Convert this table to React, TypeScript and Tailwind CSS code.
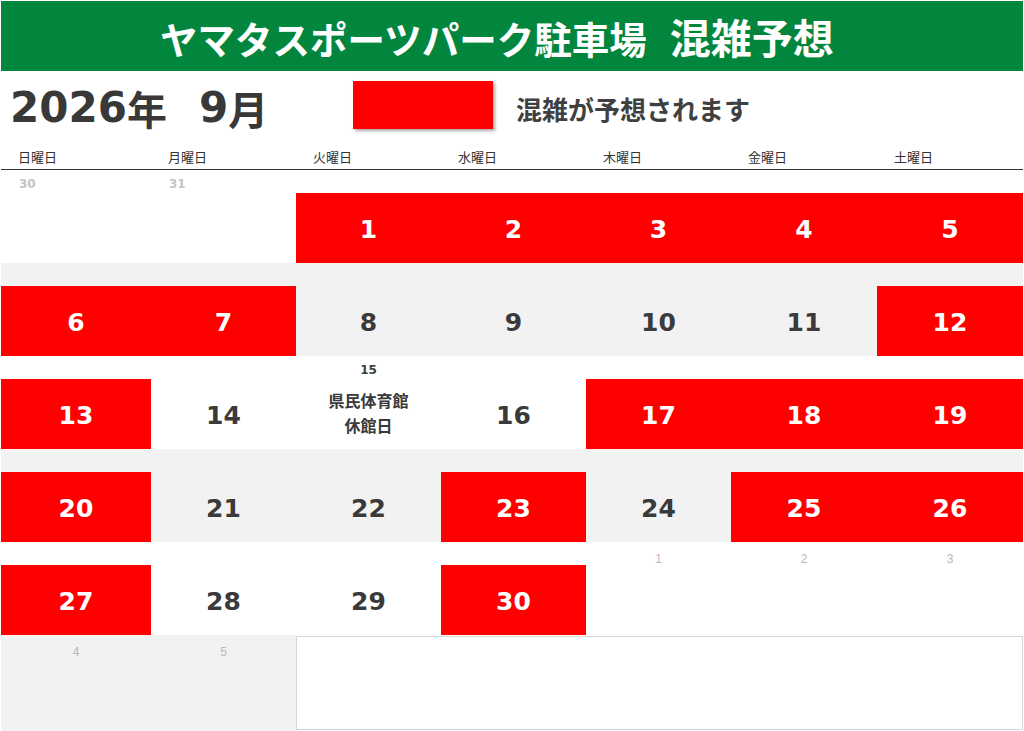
import React from "react";

type Cell = {
  n?: number;
  red?: boolean;
  label?: string;
  lt?: "prev" | "next" | "dark";
  note?: boolean;
};

const GRID = "grid grid-cols-[150px_145px_145px_145px_145px_146px_146px]";
const NUM_FONT = { fontFamily: '"DejaVu Sans", "Noto Sans CJK JP", sans-serif' };
const JP_FONT = { fontFamily: '"Noto Sans CJK JP", "Noto Sans", sans-serif' };

const weeks: { gray: boolean; cells: Cell[] }[] = [
  {
    gray: false,
    cells: [
      { label: "30", lt: "prev" },
      { label: "31", lt: "prev" },
      { n: 1, red: true },
      { n: 2, red: true },
      { n: 3, red: true },
      { n: 4, red: true },
      { n: 5, red: true },
    ],
  },
  {
    gray: true,
    cells: [
      { n: 6, red: true },
      { n: 7, red: true },
      { n: 8 },
      { n: 9 },
      { n: 10 },
      { n: 11 },
      { n: 12, red: true },
    ],
  },
  {
    gray: false,
    cells: [
      { n: 13, red: true },
      { n: 14 },
      { label: "15", lt: "dark", note: true },
      { n: 16 },
      { n: 17, red: true },
      { n: 18, red: true },
      { n: 19, red: true },
    ],
  },
  {
    gray: true,
    cells: [
      { n: 20, red: true },
      { n: 21 },
      { n: 22 },
      { n: 23, red: true },
      { n: 24 },
      { n: 25, red: true },
      { n: 26, red: true },
    ],
  },
  {
    gray: false,
    cells: [
      { n: 27, red: true },
      { n: 28 },
      { n: 29 },
      { n: 30, red: true },
      { label: "1", lt: "next" },
      { label: "2", lt: "next" },
      { label: "3", lt: "next" },
    ],
  },
];

function Label({ c }: { c: Cell }) {
  if (!c.label) return <div className="h-[23px]" />;
  if (c.lt === "prev")
    return (
      <div
        className="h-[23px] flex items-center pt-[4px] pl-[18px] text-[12px] font-bold text-[#c4c4c4]"
        style={NUM_FONT}
      >
        {c.label}
      </div>
    );
  if (c.lt === "dark")
    return (
      <div
        className="h-[23px] flex items-center justify-center pt-[5px] text-[12px] font-bold text-[#404040]"
        style={NUM_FONT}
      >
        {c.label}
      </div>
    );
  return (
    <div
      className="h-[23px] flex items-center justify-center pt-[10px] text-[12px] text-[#b8b8b8]"
      style={{ fontFamily: '"Liberation Sans Narrow", "Liberation Sans", sans-serif' }}
    >
      {c.label}
    </div>
  );
}

function DayCell({ c }: { c: Cell }) {
  return (
    <div className="flex flex-col">
      <Label c={c} />
      <div
        className={`h-[70px] flex items-center justify-center ${
          c.red ? "bg-[#ff0000] text-white" : "text-[#3a3a3a]"
        }`}
      >
        {c.n !== undefined && (
          <span className="text-[25px] font-bold pt-[3px]" style={NUM_FONT}>
            {c.n}
          </span>
        )}
        {c.note && (
          <div
            className="text-center text-[16px] font-bold leading-[25px] text-[#3a3a3a] -mt-[2px]"
            style={JP_FONT}
          >
            県民体育館
            <br />
            休館日
          </div>
        )}
      </div>
    </div>
  );
}

export default function App() {
  const days = ["日曜日", "月曜日", "火曜日", "水曜日", "木曜日", "金曜日", "土曜日"];
  return (
    <div className="w-[1024px] h-[731px] bg-white px-px pt-px overflow-hidden" style={JP_FONT}>
      <div className="h-[70px] bg-[#02863e] flex items-center pl-[159px]">
        <h1 className="text-white text-[37.5px] font-bold whitespace-nowrap leading-none" style={JP_FONT}>
          ヤマタスポーツパーク駐車場
          <span className="ml-[23px] text-[41px]">混雑予想</span>
        </h1>
      </div>

      <div className="h-[74px] flex items-center">
        <div className="w-[352px] pl-[9px] flex items-center text-[#383838] font-bold">
          <span className="text-[42px] leading-none" style={NUM_FONT}>
            2026
          </span>
          <span className="text-[40px] leading-none" style={JP_FONT}>
            年
          </span>
          <span className="text-[42px] leading-none ml-[32px]" style={NUM_FONT}>
            9
          </span>
          <span className="text-[40px] leading-none" style={JP_FONT}>
            月
          </span>
        </div>
        <div className="self-start mt-[10px] w-[140px] h-[48px] bg-[#ff0000] shadow-[2px_2px_3px_rgba(0,0,0,0.35)]" />
        <span className="ml-[23px] text-[26px] font-bold text-[#404040]" style={JP_FONT}>
          混雑が予想されます
        </span>
      </div>

      <div className={`${GRID} h-[25px] border-b border-[#333]`}>
        {days.map((d) => (
          <div key={d} className="flex items-center pl-[17px] text-[13px] text-[#333]" style={JP_FONT}>
            {d}
          </div>
        ))}
      </div>

      {weeks.map((w, i) => (
        <div key={i} className={`${GRID} ${w.gray ? "bg-[#f2f2f2]" : "bg-white"}`}>
          {w.cells.map((c, j) => (
            <DayCell key={j} c={c} />
          ))}
        </div>
      ))}

      <div className={`${GRID} h-[96px]`}>
        <div className="bg-[#f2f2f2]">
          <Label c={{ label: "4", lt: "next" }} />
        </div>
        <div className="bg-[#f2f2f2]">
          <Label c={{ label: "5", lt: "next" }} />
        </div>
        <div className="col-span-5 mt-px h-[94px] border border-[#d6d6d6] bg-white" />
      </div>
    </div>
  );
}
